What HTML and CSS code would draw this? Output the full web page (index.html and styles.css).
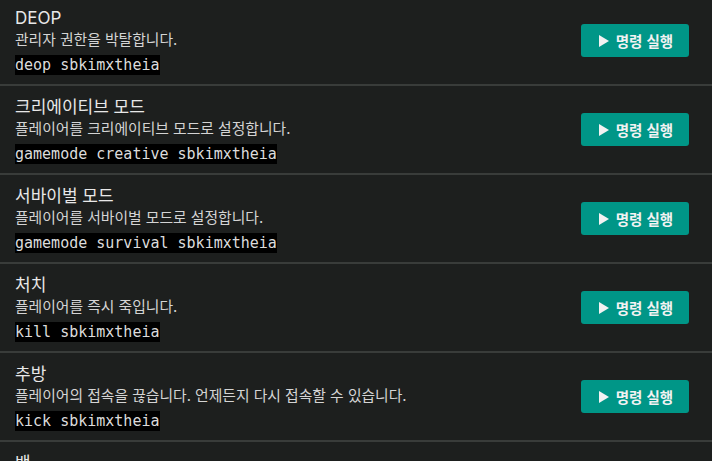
FILE: index.html
```html
<!DOCTYPE html>
<html lang="ko">
<head>
<meta charset="utf-8">
<link rel="stylesheet" href="styles.css">
</head>
<body>
<div class="list">
  <div class="row">
    <div class="info">
      <div class="title">DEOP</div>
      <div class="desc">관리자 권한을 박탈합니다.</div>
      <code class="cmd">deop sbkimxtheia</code>
    </div>
    <button class="run"><span class="tri"></span>명령 실행</button>
  </div>
  <div class="row">
    <div class="info">
      <div class="title">크리에이티브 모드</div>
      <div class="desc">플레이어를 크리에이티브 모드로 설정합니다.</div>
      <code class="cmd">gamemode creative sbkimxtheia</code>
    </div>
    <button class="run"><span class="tri"></span>명령 실행</button>
  </div>
  <div class="row">
    <div class="info">
      <div class="title">서바이벌 모드</div>
      <div class="desc">플레이어를 서바이벌 모드로 설정합니다.</div>
      <code class="cmd">gamemode survival sbkimxtheia</code>
    </div>
    <button class="run"><span class="tri"></span>명령 실행</button>
  </div>
  <div class="row">
    <div class="info">
      <div class="title">처치</div>
      <div class="desc">플레이어를 즉시 죽입니다.</div>
      <code class="cmd">kill sbkimxtheia</code>
    </div>
    <button class="run"><span class="tri"></span>명령 실행</button>
  </div>
  <div class="row">
    <div class="info">
      <div class="title">추방</div>
      <div class="desc">플레이어의 접속을 끊습니다. 언제든지 다시 접속할 수 있습니다.</div>
      <code class="cmd">kick sbkimxtheia</code>
    </div>
    <button class="run"><span class="tri"></span>명령 실행</button>
  </div>
  <div class="row">
    <div class="info">
      <div class="title">밴</div>
      <div class="desc">플레이어를 서버에서 차단합니다.</div>
      <code class="cmd">ban sbkimxtheia</code>
    </div>
    <button class="run"><span class="tri"></span>명령 실행</button>
  </div>
</div>
</body>
</html>
```

FILE: styles.css
```css
html, body {
  margin: 0;
  padding: 0;
  background: #1d1f1e;
  overflow: hidden;
}
body {
  font-family: Inter, "Noto Sans CJK KR", sans-serif;
  color: #e4e4e4;
}
.list {
  margin-top: -3px;
}
.row {
  display: flex;
  align-items: center;
  justify-content: space-between;
  padding: 9px 23px 9px 15px;
  border-bottom: 2px solid #393c3a;
}
.info {
  display: flex;
  flex-direction: column;
  align-items: flex-start;
}
.title {
  font-size: 17px;
  line-height: 24px;
  color: #e8e8e8;
}
.desc {
  font-size: 14.8px;
  line-height: 20px;
  color: #d4d4d4;
}
.cmd {
  margin-top: 5px;
  font-family: "DejaVu Sans Mono", monospace;
  font-size: 15px;
  line-height: 20px;
  background: #000;
  color: #dcdcdc;
}
.run {
  display: flex;
  align-items: center;
  justify-content: center;
  width: 108px;
  height: 33px;
  border: none;
  border-radius: 3px;
  background: #009687;
  color: #f2f2f2;
  font-family: "Noto Sans CJK KR", sans-serif;
  font-size: 14.5px;
  font-weight: 700;
  padding: 0 0 0 2px;
}
.tri {
  width: 0;
  height: 0;
  border-top: 6px solid transparent;
  border-bottom: 6px solid transparent;
  border-left: 10px solid #f2f2f2;
  margin-right: 7px;
}
```
